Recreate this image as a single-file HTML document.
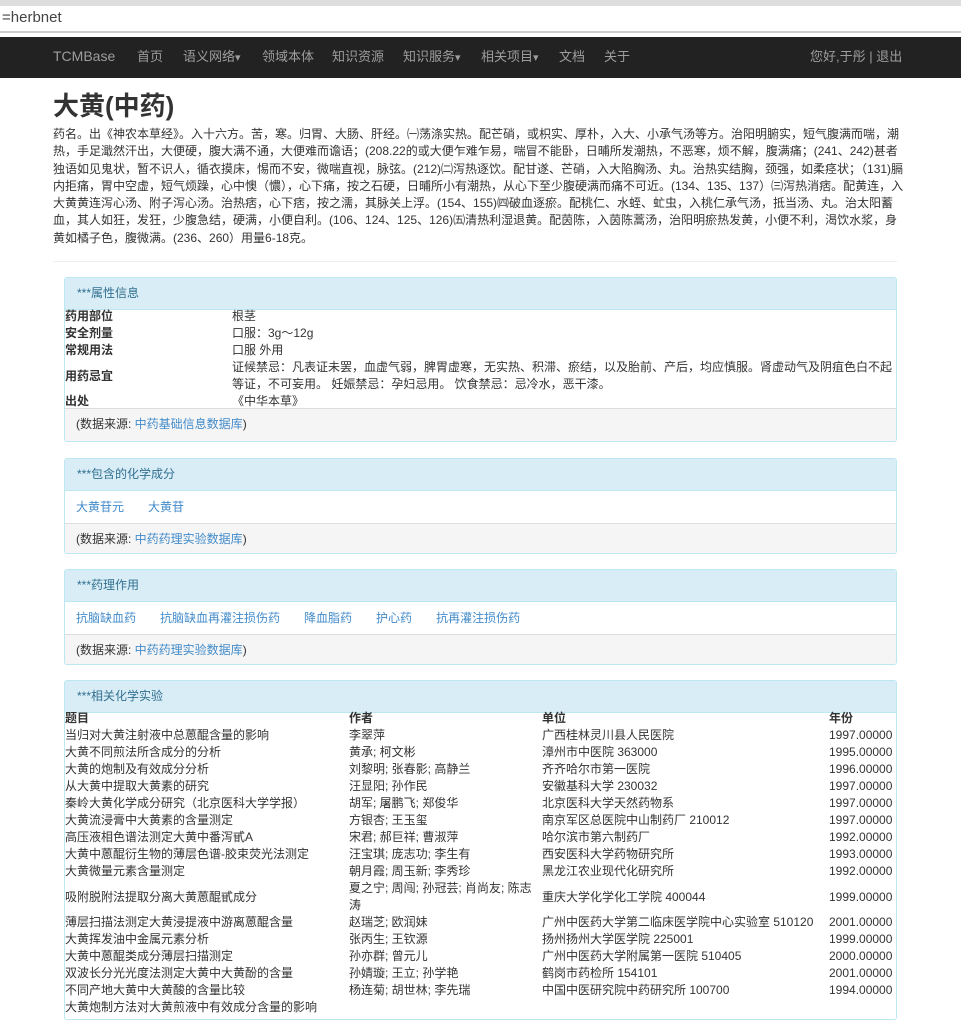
<!DOCTYPE html>
<html><head><meta charset="utf-8"><style>
*{box-sizing:border-box;margin:0;padding:0}
body{width:961px;height:1007px;overflow:hidden;background:#fff;font-family:"Liberation Sans","Noto Sans CJK SC",sans-serif;font-size:12px;color:#333;line-height:17px}
.addr{position:absolute;top:0;left:0;width:961px;height:37px;background:#fff;border-top:6px solid #ddd}
.addr .in{position:absolute;top:0;left:0;right:0;height:27px;border-bottom:2px solid #ccc;font-size:15px;line-height:24px;color:#444;padding-left:2px}
.nav{position:absolute;top:37px;left:0;width:961px;height:41px;background:#222;color:#9d9d9d;font-size:13px;line-height:39px}
.nav span{position:absolute}
a,.l{color:#428bca;text-decoration:none}
h1{position:absolute;top:90px;left:53px;font-size:26px;line-height:32px;color:#333;font-weight:bold}
.desc{position:absolute;top:126px;left:53px;width:853px;font-size:12px;line-height:17.3px}
hr{position:absolute;top:261px;left:53px;width:844px;border:0;border-top:1px solid #eee}
.p{position:absolute;left:64px;width:833px;border:1px solid #bce8f1;border-radius:3px;overflow:hidden}
.ph{background:#d9edf7;color:#31708f;height:32px;line-height:30px;padding-left:12px;border-bottom:1px solid #bce8f1}
.pf{background:#f5f5f5;border-top:1px solid #ddd;height:33px;line-height:31px;padding-left:11px}
.pb{padding:0 11px;height:32px;line-height:32px}
.pb a{margin-right:24px}
table{border-collapse:collapse;width:100%}
td,th{padding:0;vertical-align:middle;text-align:left;line-height:17px}
th{font-weight:bold}
</style></head><body>
<div class="addr"><div class="in">=herbnet</div></div>
<div class="nav">
<span style="left:53px;font-size:14px">TCMBase</span>
<span style="left:137px">首页</span>
<span style="left:183px">语义网络<small>▾</small></span>
<span style="left:262px">领域本体</span>
<span style="left:332px">知识资源</span>
<span style="left:403px">知识服务<small>▾</small></span>
<span style="left:481px">相关项目<small>▾</small></span>
<span style="left:559px">文档</span>
<span style="left:604px">关于</span>
<span style="left:810px">您好,于彤 | 退出</span>
</div>
<h1>大黄(中药)</h1>
<div class="desc">药名。出《神农本草经》。入十六方。苦，寒。归胃、大肠、肝经。㈠荡涤实热。配芒硝，或枳实、厚朴，入大、小承气汤等方。治阳明腑实，短气腹满而喘，潮热，手足濈然汗出，大便硬，腹大满不通，大便难而谵语；(208.22的或大便乍难乍易，喘冒不能卧，日晡所发潮热，不恶寒，烦不解，腹满痛；(241、242)甚者独语如见鬼状，暂不识人，循衣摸床，惕而不安，微喘直视，脉弦。(212)㈡泻热逐饮。配甘遂、芒硝，入大陷胸汤、丸。治热实结胸，颈强，如柔痉状；（131)膈内拒痛，胃中空虚，短气烦躁，心中懊（憹），心下痛，按之石硬，日晡所小有潮热，从心下至少腹硬满而痛不可近。(134、135、137）㈢泻热消痞。配黄连，入大黄黄连泻心汤、附子泻心汤。治热痞，心下痞，按之濡，其脉关上浮。(154、155)㈣破血逐瘀。配桃仁、水蛭、虻虫，入桃仁承气汤，抵当汤、丸。治太阳蓄血，其人如狂，发狂，少腹急结，硬满，小便自利。(106、124、125、126)㈤清热利湿退黄。配茵陈，入茵陈蒿汤，治阳明瘀热发黄，小便不利，渴饮水浆，身黄如橘子色，腹微满。(236、260）用量6-18克。</div>
<hr>
<div class="p" style="top:277px;height:165px">
<div class="ph">***属性信息</div>
<table style="margin-top:-2px">
<tr><th style="width:167px">药用部位</th><td>根茎</td></tr>
<tr><th>安全剂量</th><td>口服：3g～12g</td></tr>
<tr><th>常规用法</th><td>口服 外用</td></tr>
<tr><th>用药忌宜</th><td>证候禁忌：凡表证未罢，血虚气弱，脾胃虚寒，无实热、积滞、瘀结，以及胎前、产后，均应慎服。肾虚动气及阴疽色白不起等证，不可妄用。 妊娠禁忌：孕妇忌用。 饮食禁忌：忌冷水，恶干漆。</td></tr>
<tr><th>出处</th><td>《中华本草》</td></tr>
</table>
<div class="pf" style="position:absolute;bottom:0;left:0;right:0">(数据来源: <a>中药基础信息数据库</a>)</div>
</div>
<div class="p" style="top:458px;height:96px">
<div class="ph">***包含的化学成分</div>
<div class="pb"><a>大黄苷元</a><a>大黄苷</a></div>
<div class="pf">(数据来源: <a>中药药理实验数据库</a>)</div>
</div>
<div class="p" style="top:569px;height:96px">
<div class="ph">***药理作用</div>
<div class="pb"><a>抗脑缺血药</a><a>抗脑缺血再灌注损伤药</a><a>降血脂药</a><a>护心药</a><a>抗再灌注损伤药</a></div>
<div class="pf">(数据来源: <a>中药药理实验数据库</a>)</div>
</div>
<div class="p" style="top:680px;height:340px">
<div class="ph">***相关化学实验</div>
<table style="margin-top:-3px">
<tr><th style="width:284px">题目</th><th style="width:193px">作者</th><th style="width:287px">单位</th><th>年份</th></tr>
<tr><td>当归对大黄注射液中总蒽醌含量的影响</td><td>李翠萍</td><td>广西桂林灵川县人民医院</td><td>1997.00000</td></tr>
<tr><td>大黄不同煎法所含成分的分析</td><td>黄承; 柯文彬</td><td>漳州市中医院 363000</td><td>1995.00000</td></tr>
<tr><td>大黄的炮制及有效成分分析</td><td>刘黎明; 张春影; 高静兰</td><td>齐齐哈尔市第一医院</td><td>1996.00000</td></tr>
<tr><td>从大黄中提取大黄素的研究</td><td>汪显阳; 孙作民</td><td>安徽基科大学 230032</td><td>1997.00000</td></tr>
<tr><td>秦岭大黄化学成分研究（北京医科大学学报）</td><td>胡军; 屠鹏飞; 郑俊华</td><td>北京医科大学天然药物系</td><td>1997.00000</td></tr>
<tr><td>大黄流浸膏中大黄素的含量测定</td><td>方银杏; 王玉玺</td><td>南京军区总医院中山制药厂 210012</td><td>1997.00000</td></tr>
<tr><td>高压液相色谱法测定大黄中番泻甙A</td><td>宋君; 郝巨祥; 曹淑萍</td><td>哈尔滨市第六制药厂</td><td>1992.00000</td></tr>
<tr><td>大黄中蒽醌衍生物的薄层色谱-胶束荧光法测定</td><td>汪宝琪; 庞志功; 李生有</td><td>西安医科大学药物研究所</td><td>1993.00000</td></tr>
<tr><td>大黄微量元素含量测定</td><td>朝月霞; 周玉新; 李秀珍</td><td>黑龙江农业现代化研究所</td><td>1992.00000</td></tr>
<tr><td>吸附脱附法提取分离大黄蒽醌甙成分</td><td>夏之宁; 周闯; 孙冠芸; 肖尚友; 陈志涛</td><td>重庆大学化学化工学院 400044</td><td>1999.00000</td></tr>
<tr><td>薄层扫描法测定大黄浸提液中游离蒽醌含量</td><td>赵瑞芝; 欧润妹</td><td>广州中医药大学第二临床医学院中心实验室 510120</td><td>2001.00000</td></tr>
<tr><td>大黄挥发油中金属元素分析</td><td>张丙生; 王钦源</td><td>扬州扬州大学医学院 225001</td><td>1999.00000</td></tr>
<tr><td>大黄中蒽醌类成分薄层扫描测定</td><td>孙亦群; 曾元儿</td><td>广州中医药大学附属第一医院 510405</td><td>2000.00000</td></tr>
<tr><td>双波长分光光度法测定大黄中大黄酚的含量</td><td>孙婧璇; 王立; 孙学艳</td><td>鹤岗市药检所 154101</td><td>2001.00000</td></tr>
<tr><td>不同产地大黄中大黄酸的含量比较</td><td>杨连菊; 胡世林; 李先瑞</td><td>中国中医研究院中药研究所 100700</td><td>1994.00000</td></tr>
<tr><td>大黄炮制方法对大黄煎液中有效成分含量的影响</td><td></td><td></td><td></td></tr>
</table>
</div>
</body></html>
